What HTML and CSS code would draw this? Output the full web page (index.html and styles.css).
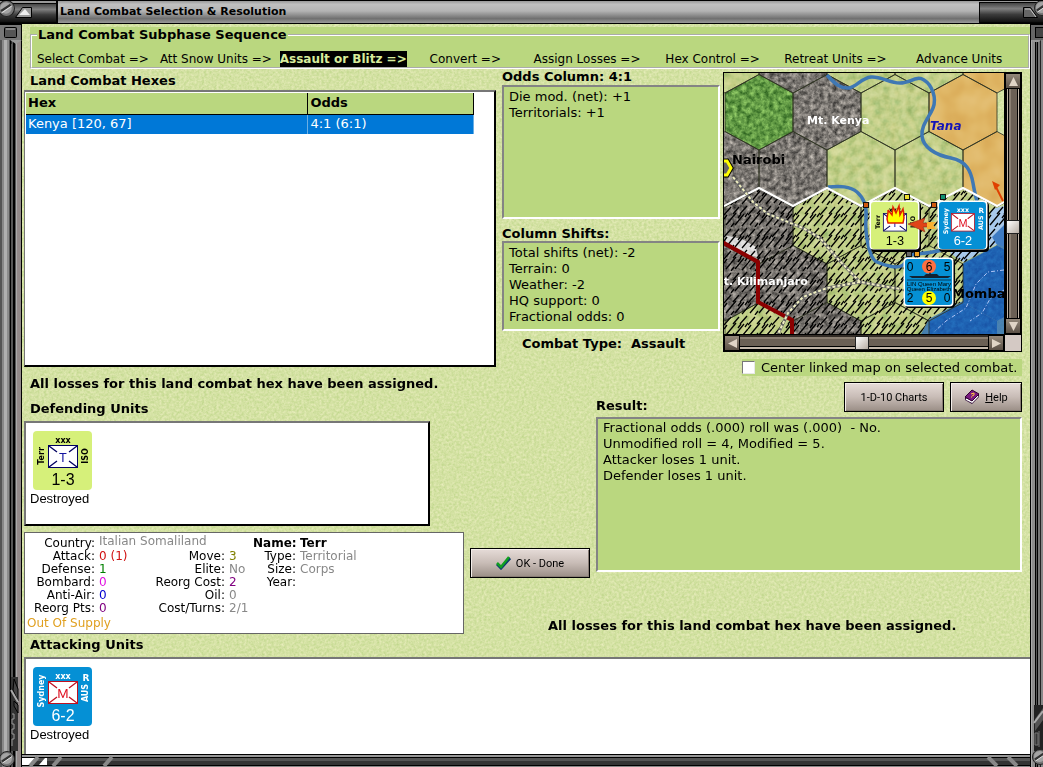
FILE: index.html
```html
<!DOCTYPE html>
<html lang="en">
<head>
  <meta charset="UTF-8">
  <title>Land Combat Selection &amp; Resolution</title>
  <meta name="viewport" content="width=device-width, initial-scale=1.0">
  <link rel="stylesheet" href="styles.css">
</head>
<body>

<!-- shared drawings -->
<svg class="defs" width="0" height="0" aria-hidden="true">
  <symbol id="terr" viewBox="0 0 59 59">
    <rect width="59" height="59" rx="4" fill="#d6f07a"/>
    <text class="cnt-bold" x="30" y="12">xxx</text>
    <rect x="15.5" y="14.5" width="29" height="22" fill="#fff" stroke="#000060"/>
    <path d="M16 15l8 6M44 15l-8 6M16 36l8-6M44 36l-8-6" stroke="#000060" stroke-width="1.3"/>
    <text class="cnt-type" x="30" y="31" fill="#1414a0">T</text>
    <text class="cnt-bold" transform="translate(11 25) rotate(-90)">Terr</text>
    <text class="cnt-bold" transform="translate(55 25) rotate(-90)">ISO</text>
    <text class="cnt-num" x="30" y="54">1-3</text>
  </symbol>
  <symbol id="sydney" viewBox="0 0 59 59">
    <rect width="59" height="59" rx="4" fill="#0590d5"/>
    <g fill="#fff">
      <text class="cnt-bold" x="30" y="12">xxx</text>
      <text class="cnt-bold" transform="translate(11 24) rotate(-90)">Sydney</text>
      <text class="cnt-bold" transform="translate(55 26) rotate(-90)">AUS</text>
      <text class="cnt-r" x="53" y="14">R</text>
      <text class="cnt-num" x="30" y="54">6-2</text>
    </g>
    <rect x="15.5" y="14.5" width="29" height="22" fill="#fff" stroke="#c01020"/>
    <path d="M16 15l8 6M44 15l-8 6M16 36l8-6M44 36l-8-6" stroke="#c01020" stroke-width="1.3"/>
    <text class="cnt-type" x="30" y="31" fill="#e01828">M</text>
  </symbol>
  <symbol id="screw" viewBox="0 0 16 16">
    <circle cx="8" cy="8" r="7.5" fill="#777" stroke="#222"/>
    <circle cx="7.5" cy="7.5" r="5.5" fill="#a4a4a4"/>
    <path d="M3 10.5L12 4.5" stroke="#333" stroke-width="2.5"/>
    <path d="M3.5 12L13 5.5" stroke="#ddd"/>
  </symbol>
</svg>

<div class="window">
  <header class="titlebar">
    <svg class="corner" width="58" height="24" viewBox="0 0 58 24" aria-hidden="true">
      <defs>
        <linearGradient id="steel" x1="0" y1="0" x2="0" y2="1">
          <stop offset="0" stop-color="#444"/><stop offset=".3" stop-color="#808080"/><stop offset=".6" stop-color="#3c3c3c"/><stop offset="1" stop-color="#111"/>
        </linearGradient>
      </defs>
      <rect width="58" height="24" fill="#050505"/>
      <rect y="1" width="56" height="2" fill="#999"/>
      <rect y="4" width="56" height="18" fill="url(#steel)"/>
      <path d="M15.5 17.5l7-10h9v10z" fill="#999" stroke="#000"/>
      <path d="M19 15l6-6 5 6z" fill="#eee"/>
      <use href="#screw" x="-2" y="0" width="17" height="17"/>
    </svg>
    <h1>Land Combat Selection &amp; Resolution</h1>
    <svg class="corner" width="64" height="24" viewBox="0 0 64 24" aria-hidden="true">
      <rect width="64" height="24" fill="#050505"/>
      <rect y="1" width="64" height="1" fill="#999"/>
      <rect x="1" y="3" width="63" height="19" fill="url(#steel)"/>
      <path d="M44.5 7.5h7l7 10h-14z" fill="#666" stroke="#000"/>
      <path d="M46 9h5l6 8" fill="none" stroke="#ccc"/>
      <use href="#screw" x="55" y="0" width="16" height="16"/>
    </svg>
  </header>

  <div class="rail left">
    <svg width="22" height="20" viewBox="0 0 22 20" aria-hidden="true">
      <rect width="22" height="16" fill="#777"/>
      <path d="M0 .5h22M11 16v4M21.5 0v20" stroke="#000"/>
      <rect x="4.5" y="3.5" width="12" height="10" rx="1" fill="#555" stroke="#000"/>
      <path d="M6 5h9" stroke="#bbb"/>
      <path d="M10 16h12l-6 4z" fill="#999"/>
    </svg>
    <svg width="22" height="90" viewBox="0 0 22 90" aria-hidden="true">
      <path d="M11 0h7v74h-7z" fill="#333"/>
      <path d="M14 2l4 10v12l-5-11zM14 24l4 4v8l-4-7z" fill="#444" stroke="#000"/>
      <path d="M11 13l7 12" stroke="#aaa" stroke-width="2"/>
      <path d="M12 37h2v5h-2v5h2v5h-2v5h2v5h-2v7" fill="none" stroke="#999"/>
      <use href="#screw" x="-1" y="74" width="16" height="16"/>
    </svg>
  </div>

  <main>
    <div class="sequence">
      <fieldset>
        <legend>Land Combat Subphase Sequence</legend>
        <div class="steps">
          <span>Select Combat =&gt;</span>
          <span>Att Snow Units =&gt;</span>
          <span><b class="current">Assault or Blitz =&gt;</b></span>
          <span>Convert =&gt;</span>
          <span>Assign Losses =&gt;</span>
          <span>Hex Control =&gt;</span>
          <span>Retreat Units =&gt;</span>
          <span>Advance Units</span>
        </div>
      </fieldset>
    </div>

    <div class="board">
      <section class="hexes">
        <h2>Land Combat Hexes</h2>
        <div class="hex-list">
          <table>
            <thead>
              <tr><th class="hex-col">Hex</th><th>Odds</th></tr>
            </thead>
            <tbody>
              <tr><td>Kenya [120, 67]</td><td>4:1 (6:1)</td></tr>
            </tbody>
          </table>
        </div>
      </section>

      <section class="odds">
        <h2>Odds Column: 4:1</h2>
        <div class="memo odds-memo">
          <p>Die mod. (net): +1</p>
          <p>Territorials: +1</p>
        </div>
        <h2>Column Shifts:</h2>
        <div class="memo shifts-memo">
          <p>Total shifts (net): -2</p>
          <p>Terrain: 0</p>
          <p>Weather: -2</p>
          <p>HQ support: 0</p>
          <p>Fractional odds: 0</p>
        </div>
        <p class="combat-type">Combat Type:&nbsp; Assault</p>
      </section>

      <section class="map-side">
        <div class="map">
          <svg class="terrain" viewBox="0 0 280 261" preserveAspectRatio="xMidYMid slice">
            <defs>
              <polygon id="hex" points="0,-37.5 34,-19 34,19.5 0,38 -34,19.5 -34,-19"/>
              <filter id="fine" x="0" y="0" width="1" height="1" color-interpolation-filters="sRGB">
                <feTurbulence type="fractalNoise" baseFrequency=".22" numOctaves="4" seed="4"/>
                <feColorMatrix values=".8 0 0 0 .1  .8 0 0 0 .1  .8 0 0 0 .1  0 0 0 0 1"/>
                <feBlend in2="SourceGraphic" mode="overlay"/>
                <feComposite in2="SourceGraphic" operator="in"/>
              </filter>
              <filter id="patchy" x="0" y="0" width="1" height="1" color-interpolation-filters="sRGB">
                <feTurbulence type="fractalNoise" baseFrequency=".12" numOctaves="3" seed="9"/>
                <feColorMatrix values="1.1 0 0 0 -.05  .8 .2 0 0 0  .6 .2 0 0 .05  0 0 0 0 1"/>
                <feBlend in2="SourceGraphic" mode="soft-light"/>
                <feComposite in2="SourceGraphic" operator="in"/>
              </filter>
              <filter id="sandy" x="0" y="0" width="1" height="1" color-interpolation-filters="sRGB">
                <feTurbulence type="fractalNoise" baseFrequency=".05" numOctaves="2" seed="2"/>
                <feColorMatrix values=".4 0 0 0 .3  .4 0 0 0 .3  .4 0 0 0 .3  0 0 0 0 1"/>
                <feBlend in2="SourceGraphic" mode="soft-light"/>
                <feComposite in2="SourceGraphic" operator="in"/>
              </filter>
              <pattern id="hatch" width="24" height="22" patternUnits="userSpaceOnUse">
                <path d="M0 10l7-8M2 20l10-12M9 9l6-7M11 20l9-11M16 9l7-8M18 21l6-7M0 14l3-4M7 22l3-4M14 13l3-4M21 12l3-4" stroke="#000" stroke-width="1.3"/>
              </pattern>
            </defs>

            <g filter="url(#fine)">
              <g fill="#7b7772">
                <use href="#hex" x="69" y="-18"/><use href="#hex" x="103" y="39"/>
                <use href="#hex" x="1" y="96"/><use href="#hex" x="69" y="96"/>
                <use href="#hex" x="35" y="153"/><use href="#hex" x="-33" y="153"/>
                <use href="#hex" x="1" y="210"/><use href="#hex" x="69" y="210"/>
                <use href="#hex" x="103" y="267"/>
              </g>
              <use href="#hex" x="35" y="39" fill="#629a45"/>
              <g fill="#2c66aa">
                <use href="#hex" x="273" y="210"/><use href="#hex" x="239" y="267"/>
              </g>
            </g>
            <g filter="url(#patchy)">
              <g fill="#c2cf8e">
                <use href="#hex" x="1" y="-18"/><use href="#hex" x="137" y="-18"/><use href="#hex" x="205" y="-18"/>
                <use href="#hex" x="171" y="39"/><use href="#hex" x="137" y="96"/><use href="#hex" x="205" y="96"/>
                <use href="#hex" x="103" y="153"/><use href="#hex" x="171" y="153"/><use href="#hex" x="239" y="153"/>
                <use href="#hex" x="137" y="210"/><use href="#hex" x="205" y="210"/>
                <use href="#hex" x="35" y="267"/><use href="#hex" x="171" y="267"/>
              </g>
            </g>
            <g filter="url(#sandy)" fill="#e0b766">
              <use href="#hex" x="273" y="-18"/><use href="#hex" x="239" y="39"/><use href="#hex" x="273" y="96"/>
            </g>
            <path d="M280 133l-12 3-6 22-20 8-16 14 13 9 34-18 7 3z" fill="#a8c8ea"/>
            <path d="M280 152l-12 12 5 8-34 18v38l-34 18-8 15h83z" fill="#1b62b5" opacity=".75"/>
            <path d="M280 197l-16 2-12 12-10 24-20 13-12 11M280 217l-14 9-8 14-12 8" fill="none" stroke="#b0c4f4" stroke-dasharray="4 2 1 2"/>
            <path d="M0 162l18 4 14 8 2 10-18-4L0 170z" fill="#fff" opacity=".75"/>

            <g fill="none" stroke="#2b3020" stroke-width=".8">
              <use href="#hex" x="1" y="-18"/><use href="#hex" x="69" y="-18"/><use href="#hex" x="137" y="-18"/><use href="#hex" x="205" y="-18"/><use href="#hex" x="273" y="-18"/>
              <use href="#hex" x="35" y="39"/><use href="#hex" x="103" y="39"/><use href="#hex" x="171" y="39"/><use href="#hex" x="239" y="39"/>
              <use href="#hex" x="1" y="96"/><use href="#hex" x="69" y="96"/><use href="#hex" x="137" y="96"/><use href="#hex" x="205" y="96"/><use href="#hex" x="273" y="96"/>
              <use href="#hex" x="35" y="153"/><use href="#hex" x="103" y="153"/><use href="#hex" x="171" y="153"/>
              <use href="#hex" x="1" y="210"/><use href="#hex" x="69" y="210"/><use href="#hex" x="137" y="210"/><use href="#hex" x="205" y="210"/>
              <use href="#hex" x="35" y="267"/><use href="#hex" x="103" y="267"/><use href="#hex" x="171" y="267"/>
            </g>
            <path d="M0 133l35-18 34 18 34-18 34 18 34-18 34 18 34-18 34 18 7-4v23l-12 12 5 8-34 18v38l-34 18-8 15H0z" fill="url(#hatch)"/>

            <!-- rivers -->
            <g fill="none" stroke="#3f78b4" stroke-width="3.5">
              <path d="M103 2c8 9 14 14 22 13s12-10 22-11 18 6 29 6 16-8 24-3 13 18 9 28-12 17-11 28 13 19 29 22 20 14 22 25 2 12 4 18"/>
              <path d="M104 114c12-1 22-1 29 5s10 14 9 26 2 40 11 44 21 7 26 3 2-8 8-10 18-1 30-5"/>
            </g>
            <path d="M0 133l35-18 34 18 34-18 34 18 34-18 34 18 34-18 34 18 7-4" fill="none" stroke="#fff" stroke-width="2"/>
            <path d="M-2 169l36 20v40l34 18v15" fill="none" stroke="#8b0000" stroke-width="4"/>

            <!-- roads -->
            <g fill="none" stroke="#666" stroke-width="3">
              <path d="M9 104l20 25 15 12 35 14 17 10 17 20 23 24 40 7M136 209l-33 6-24 9-15 16-10 21"/>
            </g>
            <g fill="none" stroke="#f0efc0" stroke-width="2" stroke-dasharray="3 2">
              <path d="M9 104l20 25 15 12 35 14 17 10 17 20 23 24 40 7M136 209l-33 6-24 9-15 16-10 21"/>
            </g>
            <path d="M-6 88H3l4 7-4 7h-9z" fill="#666" stroke="#000" stroke-width="5"/>
            <path d="M-6 88H3l4 7-4 7h-9z" fill="#666" stroke="#ff0" stroke-width="3"/>
            <path d="M272 114l7 14" stroke="#e04000" stroke-width="2"/>
            <path d="M268 108l8 4-5 5z" fill="#e04000"/>

            <g class="place">
              <text x="83" y="51" fill="#fff">Mt. Kenya</text>
              <text x="-4" y="212" fill="#fff">lt. Kilimanjaro</text>
              <text class="tana" x="206" y="57">Tana</text>
              <text class="city" x="8" y="91">Nairobi</text>
              <text class="city" x="228" y="225">Momba</text>
            </g>

            <!-- stack markers -->
            <g stroke="#111">
              <rect x="139.5" y="129.5" width="5" height="5" fill="#d05a10"/>
              <rect x="180.5" y="121.5" width="5" height="5" fill="#f0e030"/>
              <rect x="207.5" y="129.5" width="5" height="5" fill="#d05a10"/>
              <rect x="216.5" y="121.5" width="5" height="5" fill="#109070"/>
              <rect x="182.5" y="178.5" width="5" height="5" fill="#666"/>
              <rect x="190.5" y="178.5" width="5" height="5" fill="#f0a020"/>
            </g>

            <rect x="147" y="129" width="50" height="50" rx="4"/>
            <rect x="145.5" y="127.5" width="50" height="49" rx="4" fill="#fff"/>
            <use href="#terr" x="147" y="129" width="47" height="47"/>
            <path d="M164 150c-3-6 1-8 0-13l4 5 1-8 3 6 3-7 1 9 3-6c1 6 2 8 0 14z" fill="#ff0" stroke="#e02000" stroke-width="1.5"/>
            <rect x="215" y="129" width="50" height="50" rx="4"/>
            <rect x="213.5" y="127.5" width="50" height="49" rx="4" fill="#fff"/>
            <use href="#sydney" x="215" y="129" width="47" height="47"/>
            <path d="M184 151l17-6-2 5h6v4h-6l2 5z" fill="#e04418" stroke="#802010" stroke-width=".5"/>
            <path d="M203 149h9l-3 3 3 4h-9z" fill="#f8b030"/>

            <rect x="181" y="186" width="50" height="49" rx="4"/>
            <rect x="179.5" y="184.5" width="50" height="49" rx="4" fill="#fff"/>
            <rect x="181" y="186" width="47" height="46" rx="3" fill="#0590d5"/>
            <circle cx="205" cy="193.5" r="7" fill="#ff7040"/>
            <circle cx="205" cy="225" r="7" fill="#ff0"/>
            <path d="M185 203h15l2-2h3l1-2 1 2h6l2 2h12l-3 2h-36z" fill="#123"/>
            <path d="M183 207h44" stroke="#0a3a5a"/>
            <g class="ship">
              <text x="186" y="198">0</text><text x="205" y="198">6</text><text x="223" y="198">5</text>
              <text x="186" y="229">2</text><text x="205" y="229">5</text><text x="223" y="229">0</text>
              <text class="ship-name" x="205" y="213">LIN Queen Mary</text>
              <text class="ship-name" x="205" y="218">Queen Elizabeth</text>
            </g>
          </svg>
          <div class="scroll vertical">
            <button aria-label="Scroll up"><svg width="9" height="9"><path d="M4.5 0L9 9H0z"/></svg></button>
            <input type="range" aria-label="Vertical position" min="0" max="100" value="61">
            <button aria-label="Scroll down"><svg width="9" height="9"><path d="M0 0h9L4.5 9z"/></svg></button>
          </div>
          <div class="scroll horizontal">
            <button aria-label="Scroll left"><svg width="9" height="9"><path d="M9 0v9L0 4.5z"/></svg></button>
            <input type="range" aria-label="Horizontal position" min="0" max="100" value="49">
            <button aria-label="Scroll right"><svg width="9" height="9"><path d="M0 0l9 4.5L0 9z"/></svg></button>
          </div>
          <div class="grip"></div>
        </div>
        <label class="center-map"><input type="checkbox">Center linked map on selected combat.</label>
      </section>

      <section class="defence">
        <h2>All losses for this land combat hex have been assigned.</h2>
        <h2>Defending Units</h2>
        <div class="units defenders">
          <figure>
            <svg width="59" height="59"><use href="#terr"/></svg>
            <figcaption>Destroyed</figcaption>
          </figure>
        </div>
        <div class="detail-row">
          <div class="unit-info">
            <dl>
              <dt>Country:</dt><dd class="country">Italian Somaliland</dd>
              <dt class="name">Name:</dt><dd class="name">Terr</dd>
              <dt>Attack:</dt><dd class="red">0 (1)</dd>
              <dt>Move:</dt><dd class="olive">3</dd>
              <dt>Type:</dt><dd>Territorial</dd>
              <dt>Defense:</dt><dd class="green">1</dd>
              <dt>Elite:</dt><dd>No</dd>
              <dt>Size:</dt><dd>Corps</dd>
              <dt>Bombard:</dt><dd class="magenta">0</dd>
              <dt>Reorg Cost:</dt><dd class="purple">2</dd>
              <dt>Year:</dt><dd></dd>
              <dt>Anti-Air:</dt><dd class="blue">0</dd>
              <dt>Oil:</dt><dd class="last">0</dd>
              <dt>Reorg Pts:</dt><dd class="purple">0</dd>
              <dt>Cost/Turns:</dt><dd class="last">2/1</dd>
            </dl>
            <p class="supply">Out Of Supply</p>
          </div>
          <button class="btn done">
            <svg width="15" height="14" viewBox="0 0 15 14"><path d="M1 8l4 4 9-10" fill="none" stroke="#0a3a70" stroke-width="3"/><path d="M1 7l4 4 8-10" fill="none" stroke="#10a020" stroke-width="2.5"/></svg>
            OK - Done
          </button>
        </div>
        <h2>Attacking Units</h2>
      </section>

      <section class="result">
        <div class="result-head">
          <h2>Result:</h2>
          <button class="btn charts">1-D-10 Charts</button>
          <button class="btn help">
            <svg width="16" height="16" viewBox="0 0 16 16"><path d="M1 8v3l7 4 7-7V5z" fill="#300838"/><path d="M2 10l6 3 6-6" fill="none" stroke="#fff" stroke-width="1.5"/><path d="M1 8l7-7 7 4-7 7z" fill="#7a1a80" stroke="#300030"/><path d="M7 5l3-1v2l-2 1M7 8h1" fill="none" stroke="#ffd040"/></svg>
            <span><u>H</u>elp</span>
          </button>
        </div>
        <div class="memo result-memo">
          <p>Fractional odds (.000) roll was (.000)&nbsp; - No.</p>
          <p>Unmodified roll = 4, Modified = 5.</p>
          <p>Attacker loses 1 unit.</p>
          <p>Defender loses 1 unit.</p>
        </div>
        <p class="verdict">All losses for this land combat hex have been assigned.</p>
      </section>
    </div>

    <div class="units attackers">
      <figure>
        <svg width="59" height="59"><use href="#sydney"/></svg>
        <figcaption>Destroyed</figcaption>
      </figure>
    </div>

    <div class="bottom-bar">
      <svg width="120" height="13" viewBox="0 0 120 13" aria-hidden="true">
        <path d="M0 4h13l-6 7H0zM17 11l6-7h2v7z" fill="#fff"/>
        <path d="M8 12l8-9M31 12l8-9M82 12l8-9" stroke="#888" stroke-width="4"/>
      </svg>
      <svg width="80" height="13" viewBox="0 0 80 13" aria-hidden="true">
        <path d="M38 3l9 9M58 3l9 9" stroke="#888" stroke-width="4"/>
      </svg>
    </div>
  </main>

  <div class="rail right">
    <svg width="13" height="18" viewBox="0 0 13 18" aria-hidden="true">
      <rect width="13" height="16" fill="#666"/>
      <path d="M0 .5h13M.5 0v18" stroke="#000"/>
      <rect x="5.5" y="3.5" width="12" height="10" fill="#444" stroke="#000"/>
      <path d="M1 16h10l-5 4z" fill="#999"/>
    </svg>
    <svg width="13" height="62" viewBox="0 0 13 62" aria-hidden="true">
      <path d="M4 0h9v46H4z" fill="#222"/>
      <path d="M5 14L13 3v12L5 26z" fill="#555"/>
      <path d="M4 18l9-12" stroke="#aaa" stroke-width="2"/>
      <path d="M9 26v16M5 28h3v12H5z" stroke="#777" fill="#333"/>
      <use href="#screw" x="2" y="44" width="16" height="16"/>
    </svg>
  </div>
</div>

</body>
</html>
```
FILE: styles.css
```css
* {
  box-sizing: border-box;
}

body {
  margin: 0;
  font-family: "DejaVu Sans", Verdana, sans-serif;
  font-size: 13px;
  line-height: 16px;
  color: #000;
}

h1, h2, p, dl, dd, figure {
  margin: 0;
}

h2 {
  font-size: 13px;
  line-height: 16px;
}

.defs {
  position: absolute;
  overflow: visible;
}

/* window frame */
.window {
  min-height: 100vh;
  display: grid;
  grid-template-columns: 22px 1fr 13px;
  grid-template-rows: 24px 1fr;
}

.titlebar {
  grid-column: 1 / -1;
  display: flex;
  align-items: center;
  border-top: 1px solid #000;
  border-bottom: 1px solid #000;
  background: linear-gradient(#999, #c0c0c0 15%, #b4b4b4 45%, #707070 80%, #999);
  overflow: hidden;
}

.titlebar h1 {
  flex: 1;
  padding-left: 2px;
  font-size: 11px;
  line-height: 16px;
}

.rail {
  display: flex;
  flex-direction: column;
  justify-content: space-between;
  overflow: hidden;
}

.rail.left {
  background: linear-gradient(90deg, #555 0 2px, #888 2px 4px, #b0b0b0 4px 7px, #8c8c8c 7px 9px, #555 9px 10px, #000 10px 11px, #555 11px 13px, #000 13px 15px, #555 15px 16px, #aaa 16px 17px, #938a8a 17px 21px, #000 21px);
}

.rail.right {
  background: linear-gradient(90deg, #000 0 1px, #aaa 1px 2px, #8d8d8d 2px 5px, #000 5px 6px, #555 6px 7px, #000 7px 8px, #777 8px 10px, #222 10px 11px, #888 11px);
}

main {
  min-width: 0;
  display: flex;
  flex-direction: column;
  background-color: #d2e0a2;
  background-image: url("data:image/svg+xml,%3Csvg xmlns='http://www.w3.org/2000/svg' width='160' height='160'%3E%3Cfilter id='n' x='0' y='0' width='1' height='1' color-interpolation-filters='sRGB'%3E%3CfeTurbulence type='fractalNoise' baseFrequency='.4' numOctaves='3' stitchTiles='stitch'/%3E%3CfeColorMatrix values='.2 0 0 0 .73 .11 0 0 0 .83 .24 0 0 0 .52 0 0 0 0 1'/%3E%3C/filter%3E%3Crect width='160' height='160' filter='url(%23n)'/%3E%3C/svg%3E");
}

.bottom-bar {
  display: flex;
  justify-content: space-between;
  height: 13px;
  background: linear-gradient(#000 0 1px, #999 1px 3px, #000 3px 4px, #555 4px 7px, #333 7px 11px, #000 11px 12px, #888 12px);
}

/* phase sequence */
.sequence {
  margin: 3px 0 0 8px;
  background: #bad77f;
}

.sequence fieldset {
  min-width: 0;
  margin: 0;
  padding: 8px 0 0 5px;
  border: 2px groove #fff;
}

.sequence legend {
  padding: 0 1px;
  font-weight: bold;
}

.steps {
  display: grid;
  grid-template-columns: 123fr 120fr 150fr 104fr 132fr 119fr 132fr 112fr;
  font-size: 12px;
  white-space: nowrap;
}

.current {
  display: inline-block;
  background: #000;
  color: #d8ec9c;
}

/* board */
.board {
  display: grid;
  grid-template-columns: 478fr 94fr 127fr 299fr;
  padding: 3px 8px 0 2px;
}

.hexes {
  display: flex;
  flex-direction: column;
  padding: 1px 6px 9px 0;
}

.hexes h2 {
  padding: 0 0 1px 6px;
}

.hex-list {
  flex: 1;
  padding: 1px 0 0 1px;
  background: #fff;
  border: 2px solid #000;
  border-top-color: #777;
  border-left: 1px solid #777;
}

.hex-list table {
  width: calc(100% - 20px);
  border-collapse: collapse;
  table-layout: fixed;
}

.hex-list th {
  height: 21px;
  padding: 0 2px;
  text-align: left;
  background: #bad77f;
  border-right: 1px solid #000;
  border-bottom: 1px solid #000;
}

.hex-list td {
  height: 20px;
  padding: 0 2px;
  background: #0078d7;
  color: #fff;
  border-right: 1px solid #6aaee4;
}

.hex-col {
  width: 63%;
}

.odds {
  grid-column: 2 / 4;
  padding-right: 3px;
}

.odds h2 {
  margin-top: -3px;
}

.memo {
  padding: 2px 5px;
  background: #bad77f;
  border: 2px solid #fff;
  border-top-color: #848484;
  border-left-color: #848484;
}

.odds-memo {
  height: 134px;
  margin-bottom: 10px;
}

.shifts-memo {
  height: 90px;
  margin-top: -1px;
}

.combat-type {
  margin-top: 5px;
  padding-left: 20px;
  font-weight: bold;
}

/* linked map */
.map {
  display: grid;
  grid-template-columns: 1fr 17px;
  grid-template-rows: 261px 17px;
  border: 1px solid #000;
}

.terrain {
  width: 100%;
  height: 261px;
}

.place {
  font-size: 11px;
  font-weight: bold;
}

.place .city {
  font-size: 13px;
}

.place .tana {
  font-size: 12px;
  font-style: italic;
  fill: #1414b8;
}

.cnt-bold {
  font-size: 8px;
  font-weight: bold;
  text-anchor: middle;
}

.cnt-r {
  font-size: 9px;
  font-weight: bold;
  text-anchor: middle;
}

.cnt-type {
  font-family: Roboto, sans-serif;
  font-size: 13px;
  text-anchor: middle;
}

.cnt-num {
  font-family: "Liberation Sans", Arial, sans-serif;
  font-size: 16px;
  text-anchor: middle;
}

.ship {
  font-family: "Liberation Sans", Arial, sans-serif;
  font-size: 12px;
  text-anchor: middle;
}

.ship-name {
  font-size: 6px;
}

.scroll {
  display: flex;
  background: #5d5248;
}

.scroll.vertical {
  flex-direction: column;
  border-left: 1px solid #000;
}

.scroll.horizontal {
  border-top: 1px solid #000;
}

.scroll button {
  flex: none;
  width: 16px;
  height: 16px;
  padding: 0;
  display: flex;
  align-items: center;
  justify-content: center;
  border: 1px solid #000;
  background: linear-gradient(#94887a, #5b5046);
}

.scroll button svg {
  fill: #e0d4c6;
}

.scroll input {
  appearance: none;
  flex: 1;
  min-width: 0;
  min-height: 0;
  margin: 0;
}

.scroll.horizontal input {
  height: 16px;
  background: linear-gradient(#332c26 0 2px, #8b7f72 2px 4px, #6b6055 4px 11px, #000 11px 12px, #c4b8aa 12px 14px, #000 14px);
}

.scroll.vertical input {
  writing-mode: vertical-lr;
  width: 16px;
  background: linear-gradient(90deg, #000 0 2px, #c4b8aa 2px 3px, #000 3px 4px, #8b7f72 4px 6px, #6b6055 6px 12px, #000 12px 13px, #c4b8aa 13px 14px, #000 14px);
}

.scroll input::-webkit-slider-thumb {
  appearance: none;
  width: 14px;
  height: 14px;
  border: 1px solid #222;
  background: linear-gradient(135deg, #fff, #b8aea4);
}

.grip {
  background: #d4c9c4;
  border-top: 1px solid #000;
  border-left: 1px solid #000;
}

.center-map {
  display: flex;
  align-items: center;
  gap: 6px;
  margin: 7px 0 0 19px;
  height: 17px;
  background: #bad77f;
  white-space: nowrap;
}

.center-map input {
  appearance: none;
  width: 13px;
  height: 13px;
  margin: 0;
  background: #fff;
  border: 1px solid #e8e8e8;
  border-top-color: #777;
  border-left-color: #777;
}

/* unit boxes */
.defence {
  grid-column: 1 / 3;
}

.defence h2 {
  padding-left: 6px;
}

.defence h2 + h2 {
  margin-top: 9px;
}

.units {
  padding: 8px 6px;
  background: #fff;
  border-top: 2px solid #777;
  border-left: 2px solid #777;
}

.units svg {
  display: block;
  margin: 0 0 1px 1px;
}

.units figcaption {
  margin-left: -2px;
  font-family: "Liberation Sans", Arial, sans-serif;
}

.defenders {
  width: 71%;
  height: 105px;
  margin-top: 4px;
  border-right: 2px solid #000;
  border-bottom: 2px solid #000;
}

.attackers {
  flex: 1;
  margin: 4px 0 0 2px;
}

.detail-row {
  display: flex;
  gap: 6px;
  margin: 6px 6px 3px 0;
}

.unit-info {
  flex: 1;
  height: 102px;
  padding: 4px 1px 2px;
  background: #fff;
  border: 1px solid #666;
  font-size: 12px;
  line-height: 13px;
}

.unit-info dl {
  display: grid;
  grid-template-columns: 69px 47px 75px 20px 43px 1fr;
  column-gap: 4px;
}

.unit-info dt {
  text-align: right;
  white-space: nowrap;
}

.unit-info dd {
  color: #888;
  white-space: nowrap;
}

.unit-info .country {
  grid-column: span 3;
  margin-top: -2px;
}

.unit-info .last {
  grid-column: span 3;
}

.unit-info .name {
  color: #000;
  font-weight: bold;
}

.unit-info .red { color: #d01010; }
.unit-info .olive { color: #808000; }
.unit-info .green { color: #008000; }
.unit-info .magenta { color: #e010e0; }
.unit-info .purple { color: #800080; }
.unit-info .blue { color: #0000d0; }

.supply {
  padding-left: 1px;
  margin-top: 2px;
  color: #e0a020;
}

/* buttons */
.btn {
  display: flex;
  align-items: center;
  justify-content: center;
  gap: 5px;
  height: 30px;
  padding: 0;
  border: 1px solid #000;
  box-shadow: inset 1px 1px #f4eeea, inset -1px -1px #887c74;
  background: linear-gradient(#e6dcd8, #c8bcb6 50%, #9a8e86);
  font-family: Roboto, Arial, sans-serif;
  font-size: 11px;
  color: #000;
}

.done {
  width: 120px;
  margin-top: 16px;
}

.charts {
  width: 100px;
}

.help {
  width: 72px;
}

/* result */
.result {
  grid-column: 3 / 5;
  padding-top: 6px;
}

.result-head {
  display: flex;
  gap: 6px;
}

.result-head h2 {
  flex: 1;
  padding-top: 16px;
}

.result-memo {
  height: 155px;
  margin-top: 3px;
  padding-top: 1px;
}

.verdict {
  margin: 46px 0 0 -48px;
  font-weight: bold;
  white-space: nowrap;
}
```
